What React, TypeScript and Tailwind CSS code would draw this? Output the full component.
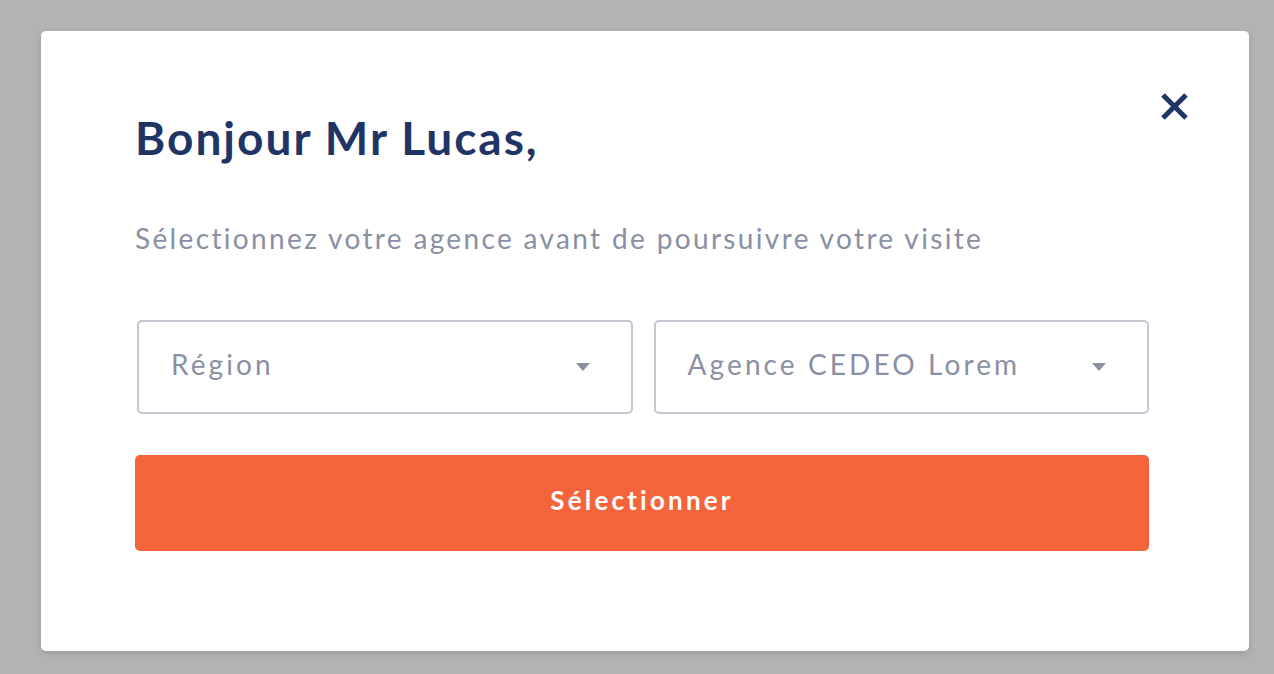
import React from 'react';

// Small filled caret for the selects
function Caret() {
    return (
        <svg width="14" height="8" viewBox="0 0 14 8" className="shrink-0">
            <path d="M0 0 H14 L7 8 Z" fill="#8a90a0" />
        </svg>
    );
}

function SelectBox({ label }: { label: string }) {
    return (
        <div className="flex-1 h-[94px] border-2 border-[#c3c7d3] rounded-[5px] flex items-center justify-between pl-[32px] pr-[41px]">
            <span className="text-[28px] leading-[28px] tracking-[3.1px] text-[#8a90a3] pb-[7px]">{label}</span>
            <Caret />
        </div>
    );
}

export default function App() {
    return (
        <div className="w-full h-[674px] bg-[#b3b3b3] pl-[41px] pt-[31px] overflow-hidden font-[Lato,sans-serif]">
            <div className="relative w-[1208px] h-[620px] bg-white rounded-[5px] shadow-[0_2px_6px_rgba(0,0,0,0.15)] pl-[94px] pr-[100px] pt-[84px]">
                {/* Close */}
                <button className="absolute top-[61px] right-[60px] w-[29px] h-[29px]">
                    <svg width="29" height="29" viewBox="0 0 29 29">
                        <path d="M3 3 L26 26 M26 3 L3 26" stroke="#1f3566" strokeWidth="5" strokeLinecap="butt" />
                    </svg>
                </button>

                <h1 className="text-[46px] leading-[46px] font-bold tracking-[2px] text-[#1f3566]">Bonjour Mr Lucas,</h1>

                <p className="mt-[63px] text-[28px] leading-[28px] tracking-[2.35px] text-[#8a90a3]">
                    Sélectionnez votre agence avant de poursuivre votre visite
                </p>

                <div className="mt-[68px] flex gap-[21px] pl-[2px]">
                    <SelectBox label="Région" />
                    <SelectBox label="Agence CEDEO Lorem" />
                </div>

                <button className="mt-[41px] w-full h-[96px] bg-[#f5643a] rounded-[5px] text-white text-[26px] leading-[26px] font-bold tracking-[3.2px] pb-[6px]">
                    Sélectionner
                </button>
            </div>
        </div>
    );
}
